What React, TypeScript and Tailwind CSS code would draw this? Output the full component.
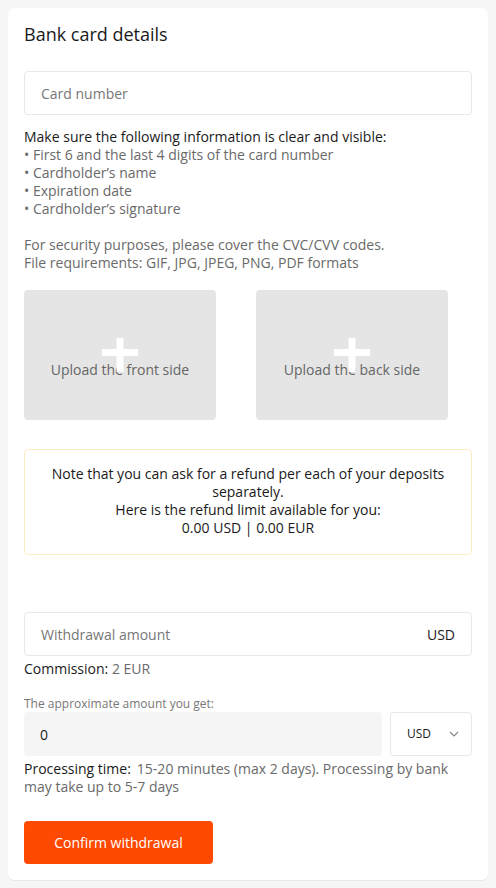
import React from "react";

function UploadBox({ label }: { label: string }) {
  return (
    <div className="relative flex h-[130px] w-[192px] items-center justify-center rounded bg-[#e5e5e5]">
      <span className="mt-[30px] text-[14px] leading-[18px] text-[#666]">{label}</span>
      <svg className="absolute left-1/2 top-1/2 -translate-x-1/2 -translate-y-1/2" width="36" height="34" viewBox="0 0 36 34">
        <rect x="0" y="11" width="36" height="7" fill="#fff" />
        <rect x="14.5" y="0" width="7" height="34" fill="#fff" />
      </svg>
    </div>
  );
}

export default function App() {
  return (
    <div className="min-h-[888px] bg-[#f6f6f6] p-2" style={{ fontFamily: '"Open Sans", "Noto Sans", sans-serif' }}>
      <div className="rounded-md bg-white px-4 pb-4 pt-[14px] shadow-[0_1px_1px_rgba(0,0,0,0.06)]">
        <h1 className="text-[18px] leading-6 text-[#1a1a1a]">Bank card details</h1>

        <div className="mt-[25px] flex h-[44px] items-center rounded border border-[#e8e8e8] px-4 text-[14px] text-[#777]">
          Card number
        </div>

        <div className="mt-[13px] text-[14px] leading-[18px] text-[#6a6a6a]">
          <p className="text-[#1a1a1a]">Make sure the following information is clear and visible:</p>
          <p>• First 6 and the last 4 digits of the card number</p>
          <p>• Cardholder’s name</p>
          <p>• Expiration date</p>
          <p>• Cardholder’s signature</p>
          <p className="mt-[18px]">For security purposes, please cover the CVC/CVV codes.</p>
          <p>File requirements: GIF, JPG, JPEG, PNG, PDF formats</p>
        </div>

        <div className="mt-[18px] flex gap-10">
          <UploadBox label="Upload the front side" />
          <UploadBox label="Upload the back side" />
        </div>

        <div className="mt-[29px] rounded border border-[#fcedc0] pb-[17px] pt-[15px] text-center text-[14px] leading-[18px] text-[#1a1a1a]">
          <p className="px-4">Note that you can ask for a refund per each of your deposits separately.</p>
          <p>Here is the refund limit available for you:</p>
          <p>0.00 USD | 0.00 EUR</p>
        </div>

        <div className="mt-[57px] flex h-[44px] items-center justify-between rounded border border-[#e8e8e8] px-4 text-[14px]">
          <span className="text-[#777]">Withdrawal amount</span>
          <span className="text-[#1a1a1a]">USD</span>
        </div>

        <p className="mt-[4px] text-[14px] leading-[18px] text-[#1a1a1a]">
          Commission: <span className="text-[#6a6a6a]">2 EUR</span>
        </p>

        <p className="mt-[18px] text-[12px] leading-4 text-[#777]">The approximate amount you get:</p>

        <div className="flex gap-2">
          <div className="flex h-[44px] flex-1 items-center rounded bg-[#f5f5f5] px-4 text-[14px] text-[#1a1a1a]">0</div>
          <div className="flex h-[44px] w-[82px] items-center justify-between rounded border border-[#e8e8e8] pl-4 pr-[12px] text-[12px] text-[#1a1a1a]">
            <span>USD</span>
            <svg width="10" height="6" viewBox="0 0 10 6" fill="none">
              <path d="M1 1l4 4 4-4" stroke="#888" strokeWidth="1.2" />
            </svg>
          </div>
        </div>

        <p className="mt-[4px] text-[14px] leading-[18px] text-[#6a6a6a]">
          <span className="mr-[6px] text-[#1a1a1a]">Processing time:</span>15-20 minutes (max 2 days). Processing by bank may take up to 5-7 days
        </p>

        <button className="mt-[25px] h-[43px] w-[189px] rounded bg-[#ff4800] text-[14px] text-white">Confirm withdrawal</button>
      </div>
    </div>
  );
}
